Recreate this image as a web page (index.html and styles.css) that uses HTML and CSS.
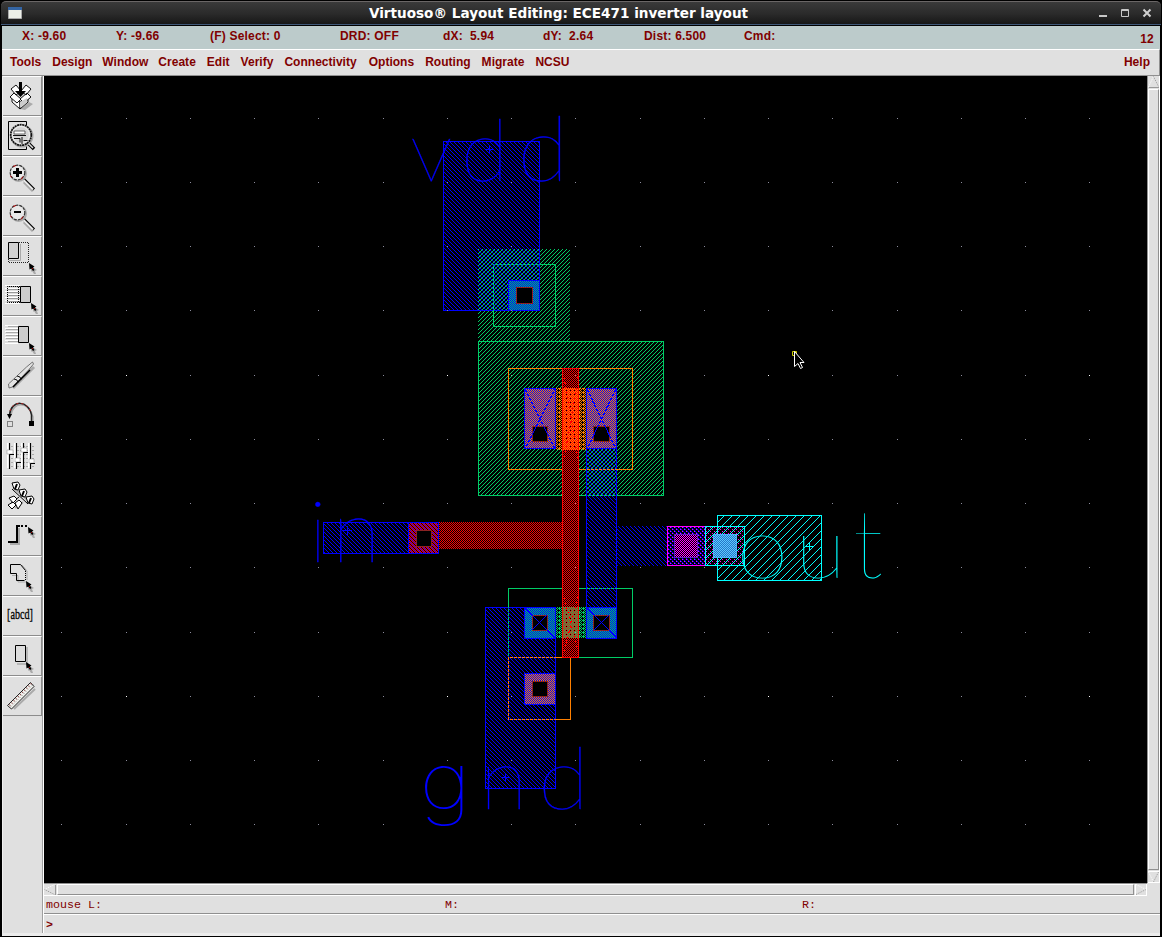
FILE: index.html
```html
<!DOCTYPE html>
<html lang="en">
<head>
<meta charset="utf-8">
<title>Virtuoso® Layout Editing: ECE471 inverter layout</title>
<link rel="stylesheet" href="styles.css">
</head>
<body>
<div class="window">
  <header class="titlebar">
    <svg class="winicon" width="14" height="12" viewBox="0 0 14 12"><path fill="#ecefe8" stroke="#aaa" d="M.5.5h13v11H.5z"/><path fill="#3465a4" d="M0 0h14v3H0z"/></svg>
    <h1>Virtuoso® Layout Editing: ECE471 inverter layout</h1>
    <svg class="controls" width="56" height="10" viewBox="0 0 56 10"><path fill="#c8c8c8" d="M0 7h8v2H0z"/><path fill="none" stroke="#c8c8c8" d="M22.500 1.500h7v7h-7zM22 2.500h8"/><path stroke="#d0d0d0" stroke-width="2" d="M44.500 1.500l7 7M51.500 1.500l-7 7"/></svg>
  </header>
  <div class="status">
    <span class="w-x">X: -9.60</span><span class="w-y">Y: -9.66</span><span class="w-sel">(F) Select: 0</span><span class="w-drd">DRD: OFF</span><span class="w-dx">dX:&nbsp; 5.94</span><span class="w-dy">dY:&nbsp; 2.64</span><span class="w-dist">Dist: 6.500</span><span>Cmd:</span><span class="count">12</span>
  </div>
  <nav class="menu">
    <span>Tools</span><span>Design</span><span class="win">Window</span><span>Create</span><span>Edit</span><span>Verify</span><span>Connectivity</span><span>Options</span><span>Routing</span><span>Migrate</span><span>NCSU</span><span class="help">Help</span>
  </nav>
  <div class="main">
    <aside class="tools">
      <svg class="defs" width="0" height="0"><defs>
        <g id="ptr"><path fill="#aaa" d="M2 3l6 4-2 1 1 3-2 0-2-3-1 1z"/><path d="M0 0l5.500 3.500-1.500 1 1.500 2.500-1.500 1-1.700-2.500L.5 6.500z"/><path fill="#a00" d="M3 5h1v1H3z"/></g>
        <g id="lens"><circle cx="18.500" cy="17.500" r="7.500" fill="none" stroke="#aaa" stroke-width="2"/><path stroke="#aaa" stroke-width="3" d="M24 26l9 9"/><path stroke="#000" stroke-width="3" d="M24 23.500l10 10"/><path stroke="#e8e8e8" stroke-width="2" d="M23.500 24l9.500 9.500"/><circle cx="17.500" cy="16.500" r="7.300" fill="#e8e8e8" stroke="#333" stroke-width="1.200" stroke-dasharray="3 1"/><path fill="none" stroke="#a00" d="M13 10.500l3-1M23 20.500l-2 3M10.500 19.500l1 2"/></g>
      </defs></svg>
      <div class="tool"><svg viewBox="3 1 38 38"><path fill="#aaa" d="M20 33l9-7 4 2-8 6z"/><g fill="#fff" stroke="#111"><path d="M12 21l8 5v7l-8-7zM28 21l-8 5v7l8-7z"/><path d="M11 13l5-4 5 6-5 4zM31 13l-5-4-5 6 5 4zM10 21l4-4 7 6-4 4zM31 21l-4-4-7 6 4 4z"/></g><path fill="#ccc" d="M20 26l7-4v4l-7 6z"/><path d="M19 6h3v9h4l-5.500 6L15 15h4z"/></svg></div>
      <div class="tool"><svg viewBox="3 1 38 38"><path fill="none" stroke="#000" d="M8.500 5.500h18v28h-18z"/><circle cx="22" cy="20" r="10.500" fill="none" stroke="#aaa" stroke-width="2"/><path stroke="#000" stroke-width="3.500" d="M29 28l5 5"/><path stroke="#ddd" stroke-width="1.500" d="M28 27l5 5"/><circle cx="21" cy="19" r="10.300" fill="#d5d5d5" stroke="#111" stroke-width="1.700" stroke-dasharray="2 .6"/><circle cx="21" cy="19" r="8.500" fill="none" stroke="#eee"/><path fill="#fff" stroke="#444" stroke-width=".8" d="M14 15h11v3H14z"/><path fill="none" stroke="#111" d="M13 19.500h13M14 22.500h6v4M22 21v7M23.500 24.500h4"/></svg></div>
      <div class="tool"><svg viewBox="3 1 38 38"><use href="#lens"/><path d="M16 12h3v3h3v3h-3v3h-3v-3h-3v-3h3z"/></svg></div>
      <div class="tool"><svg viewBox="3 1 38 38"><use href="#lens"/><path d="M14 15h7v2h-7z"/></svg></div>
      <div class="tool"><svg viewBox="3 1 38 38"><path fill="none" stroke="#222" stroke-dasharray="1 1" d="M19 6.500h9.500v20h-20v-4"/><path fill="none" stroke="#aaa" d="M9 24.500h11.500V8"/><path fill="#d0d0d0" stroke="#000" d="M8.500 6.500h10v16h-10z"/><use href="#ptr" x="29" y="27"/></svg></div>
      <div class="tool"><svg viewBox="3 1 38 38"><path fill="none" stroke="#999" d="M7 10.500h13M7 13.500h13M7 16.500h13M7 19.500h13M7 22.500h13M7 25.500h13"/><path fill="none" stroke="#fff" d="M5 9.500h15M5 12.500h15M5 15.500h15M5 18.500h15M5 21.500h15M5 24.500h15M5 27.500h15"/><path fill="none" stroke="#000" stroke-dasharray="1 1" d="M20 10.500H7.500v16H20M18.500 11v16"/><path fill="#ccc" stroke="#000" d="M20.500 10.500h10v16h-10z"/><use href="#ptr" x="31" y="27"/></svg></div>
      <div class="tool"><svg viewBox="3 1 38 38"><path fill="none" stroke="#aaa" d="M8 10.500h10M6 13.500h12M6 16.500h12M6 19.500h12M6 22.500h12M8 25.500h10"/><path fill="none" stroke="#fff" d="M5 9.500h13M5 12.500h13M5 15.500h13M5 18.500h13M5 21.500h13M5 24.500h13M5 27.500h13"/><path fill="#ccc" stroke="#000" d="M18.500 10.500h10v16h-10z"/><use href="#ptr" x="29" y="27"/></svg></div>
      <div class="tool"><svg viewBox="3 1 38 38"><path stroke="#aaa" stroke-width="3" d="M13 32L34 11"/><path fill="#e4e4e4" stroke="#555" stroke-width=".8" d="M8.500 28l18-17 6-5 1 2-5 6-16 17-3.500 1z"/><path stroke="#000" stroke-width="1.500" d="M13 31l17-17"/><path fill="none" stroke="#111" d="M14 23l3 1 1 3M17 20l3 1 1 3"/></svg></div>
      <div class="tool"><svg viewBox="3 1 38 38"><path fill="none" stroke="#aaa" stroke-width="1.500" d="M11 19C13 5 29 5 33 21v4"/><path fill="none" stroke="#222" stroke-width="1.500" d="M9.500 19C11 3 29 4 31.500 19v6"/><path fill="none" stroke="#b22" stroke-dasharray="2 3" d="M10 15C13 4 28 5 31 17"/><path d="M7 18h5l-2.500 5zM29 25h5v5h-5z"/><path fill="none" stroke="#222" stroke-dasharray="1 1" d="M7.500 25.500h5v5h-5z"/></svg></div>
      <div class="tool"><svg viewBox="3 1 38 38"><path stroke="#aaa" stroke-dasharray="2 1" d="M8 10.500h27M8 14.500h27M8 18.500h27M8 22.500h27M8 26.500h27M8 30.500h27"/><path stroke="#fff" stroke-width="2" d="M8 7v25M15 7v25M22 7v25M29 7v25"/><path stroke="#000" stroke-width="1.200" d="M9.500 7v26M16.500 7v26M23.500 7v26M30.500 7v26"/><path fill="#fff" stroke="#888" stroke-width=".5" d="M7 14h6v4H7zM15 22h5v4h-5zM21 12h6v4h-6zM29 23h5v4h-5z"/><path stroke="#000" d="M10 18.500h4M17 26.500h4M24 16.500h4M31 27.500h4"/></svg></div>
      <div class="tool"><svg viewBox="3 1 38 38"><path fill="none" stroke="#aaa" stroke-width="2" d="M15 13l16 14M15 32l8-6"/><path fill="none" stroke="#000" d="M12 13l16 15M10 28l9-7"/><g fill="#fff" stroke="#000"><path d="M12 7l6-1 2 3-2 5-4-1zM19 14l6-1 2 3-2 5-4-1zM26 21l6-1 2 3-2 5-4-1zM9 22l5-2 3 3-4 4zM8 29l5-3 3 3-4 4zM15 27l4-3 3 3-4 6z"/></g><path stroke="#000" stroke-width="2" d="M17 8l-2 5M24 15l-2 5M31 22l-2 5"/></svg></div>
      <div class="tool"><svg viewBox="3 1 38 38"><path fill="none" stroke="#aaa" stroke-width="2" d="M10 28h9V12"/><path fill="none" stroke="#000" stroke-width="2" d="M8 26h9V10h3"/><path stroke="#000" stroke-width="2" stroke-dasharray="2 2" d="M21 10h8"/><use href="#ptr" x="28" y="11"/></svg></div>
      <div class="tool"><svg viewBox="3 1 38 38"><path fill="none" stroke="#aaa" d="M12 19.500h6V26h8M22 9l5 6v9"/><path fill="none" stroke="#000" d="M25.500 14.500l-5-6h-10v9h6v7h8"/><path stroke="#000" stroke-dasharray="1 1" d="M25.500 15v10"/><use href="#ptr" x="26" y="25"/></svg></div>
      <div class="tool"><svg viewBox="3 1 38 38"><text class="abcd" x="7" y="23" textLength="26" lengthAdjust="spacingAndGlyphs">[abcd]</text></svg></div>
      <div class="tool"><svg viewBox="3 1 38 38"><path fill="none" stroke="#aaa" stroke-width="1.500" d="M17 28h10V11"/><path fill="#ddd" stroke="#000" d="M15.500 9.500h10v16h-10z"/><use href="#ptr" x="26" y="26"/></svg></div>
      <div class="tool"><svg viewBox="3 1 38 38"><path stroke="#aaa" stroke-width="2" d="M14 33l21-20"/><path fill="#f4f4f0" stroke="#222" d="M7.500 29.500l23-23 3.500 4-22.500 22.500z"/><path stroke="#844" stroke-width="1.500" stroke-dasharray="1 2" d="M9.500 29.500l22-22"/><path stroke="#777" stroke-width="1" stroke-dasharray="1 2" d="M11 30.500l22-22"/></svg></div>
    </aside>
    <section class="work">
      <div class="view">
        <svg class="canvas" width="1103" height="807" viewBox="44 76 1103 807">
          <defs>
            <pattern id="metal" width="4" height="4" patternUnits="userSpaceOnUse"><path fill="#00f" d="M0 0h1v1H0zM1 1h1v1H1zM2 2h1v1H2zM3 3h1v1H3z"/></pattern>
            <pattern id="well" width="4" height="4" patternUnits="userSpaceOnUse"><path fill="#00cc66" d="M3 0h1v1H3zM2 1h1v1H2zM1 2h1v1H1zM0 3h1v1H0z"/></pattern>
            <pattern id="poly" width="2" height="2" patternUnits="userSpaceOnUse"><path fill="#f00" d="M1 0h1v1H1zM0 1h1v1H0z"/></pattern>
            <pattern id="pact" width="2" height="2" patternUnits="userSpaceOnUse"><path fill="#ff8000" d="M1 0h1v1H1zM0 1h1v1H0z"/></pattern>
            <pattern id="nact" width="2" height="2" patternUnits="userSpaceOnUse"><path fill="#00cc66" d="M1 0h1v1H1zM0 1h1v1H0z"/></pattern>
            <pattern id="pchan" width="4" height="4" patternUnits="userSpaceOnUse"><path fill="#ff8000" d="M0 0h1v1H0zM2 0h1v1H2zM1 1h1v1H1zM3 1h1v1H3zM0 2h1v1H0zM1 3h1v1H1zM3 3h1v1H3zM3 0h1v1H3z"/></pattern>
            <pattern id="nchan" width="4" height="4" patternUnits="userSpaceOnUse"><path fill="#00cc66" d="M0 0h1v1H0zM2 0h1v1H2zM1 1h1v1H1zM3 1h1v1H3zM0 2h1v1H0zM1 3h1v1H1zM3 3h1v1H3zM3 0h1v1H3z"/></pattern>
            <pattern id="mix" width="2" height="2" patternUnits="userSpaceOnUse"><path fill="#00f" d="M0 0h1v1H0zM1 1h1v1H1z"/></pattern>
            <pattern id="m2" width="4" height="4" patternUnits="userSpaceOnUse"><path fill="#f0f" d="M0 1h1v1H0zM2 3h1v1H2z"/></pattern>
            <pattern id="via" width="2" height="2" patternUnits="userSpaceOnUse"><path fill="#f0f" d="M0 0h1v1H0zM1 1h1v1H1z"/></pattern>
            <pattern id="via2" width="2" height="2" patternUnits="userSpaceOnUse"><path fill="#2678c8" d="M0 0h2v2H0z"/><path fill="#5cc6ff" d="M0 0h1v1H0zM1 1h1v1H1z"/></pattern>
            <pattern id="m3" width="8" height="8" patternUnits="userSpaceOnUse"><path fill="#0ff" d="M7 0h1v1H7zM6 1h1v1H6zM5 2h1v1H5zM4 3h1v1H4zM3 4h1v1H3zM2 5h1v1H2zM1 6h1v1H1zM0 7h1v1H0z"/></pattern>
            <path id="dots" d="M61 0h1v1h-1zM126 0h1v1h-1zM190 0h1v1h-1zM254 0h1v1h-1zM318 0h1v1h-1zM383 0h1v1h-1zM447 0h1v1h-1zM511 0h1v1h-1zM575 0h1v1h-1zM640 0h1v1h-1zM704 0h1v1h-1zM768 0h1v1h-1zM832 0h1v1h-1zM897 0h1v1h-1zM961 0h1v1h-1zM1025 0h1v1h-1zM1089 0h1v1h-1z"/>
            <path id="majors" d="M126 0h1v1h-1zM447 0h1v1h-1zM768 0h1v1h-1zM1089 0h1v1h-1z"/>
          </defs>
          <g class="crisp">
            <!-- n-well -->
            <path fill="url(#well)" d="M478 249h92v92h-92z"/>
            <path fill="url(#well)" stroke="#00cc66" d="M478.500 341.500h185v154h-185z"/>
            <!-- metal 1 -->
            <g fill="url(#metal)" stroke="#00f">
              <path d="M443.500 141.500h96v169h-96z"/>
              <path d="M586.500 448.500h30v190h-30z"/>
              <path d="M485.500 607.500h70v181h-70z"/>
              <path d="M323.500 522.500h85v31h-85z"/>
            </g>
            <path fill="url(#metal)" d="M617 526h50v40h-50z"/>
            <!-- select layers -->
            <path fill="none" stroke="#00cc66" d="M493.500 264.500h62v62h-62zM508.500 588.500h124v69h-124z"/>
            <path fill="none" stroke="#ff8000" d="M508.500 368.500h124v101h-124zM508.500 657.500h62v62h-62z"/>
            <path fill="none" stroke="#00f" stroke-dasharray="1 3" d="M493.500 264.500h46M493.500 265v45M508.500 608v111M509 657.500h47M509 719.500h47M586 588.500h31M586 469.500h31"/>
            <!-- p-active and n-active -->
            <path fill="#000" d="M524 388h93v61h-93zM562 368h17v290h-17z"/>
            <path fill="url(#pact)" d="M524 388h32v61h-32zM586 388h31v61h-31zM524 673h31v31h-31z"/>
            <path fill="url(#nact)" d="M524 608h32v30h-32zM586 608h31v30h-31zM508 280h31v30h-31z"/>
            <path fill="url(#poly)" d="M409 522h153v27H409zM409 549h30v4h-30z"/>
            <!-- poly gate and channels -->
            <path fill="url(#pchan)" d="M556 388h30v62h-30z"/>
            <path fill="url(#nchan)" d="M556 607h30v31h-30z"/>
            <path fill="url(#poly)" d="M562 368h17v290h-17z"/>
            <path fill="none" stroke="#f00" d="M562.500 368v290M578.500 368v290M562 368.500h17M562 657.500h17"/>
            <path fill="none" stroke="#f00" stroke-dasharray="2 3" d="M564 377l14 83M578 377l-14 83M564 597l14 54M578 597l-14 54"/>
            <!-- contacts -->
            <path fill="url(#metal)" stroke="#00f" d="M408.500 522.500h30v31h-30z"/>
            <g fill="url(#mix)" stroke="#00f">
              <path d="M508.500 280.500h31v30h-31zM524.500 388.500h31v60h-31zM586.500 388.500h30v60h-30zM524.500 607.500h31v31h-31zM586.500 607.500h30v31h-30zM524.500 673.500h31v31h-31z"/>
            </g>
            <g fill="#000" stroke="#8b2323">
              <path d="M516.500 287.500h16v16h-16zM532.500 426.500h15v15h-15zM593.500 426.500h16v15h-16zM532.500 615.500h15v15h-15zM593.500 615.500h16v15h-16zM532.500 681.500h15v15h-15zM416.500 530.500h15v16h-15z"/>
            </g>
            <path fill="none" stroke="#00f" d="M525 389l30 60M555 389l-30 60M587 389l29 60M616 389l-29 60M525 608l30 30M547 615l-15 15M587 608l30 30M609 615l-15 15"/>
            <!-- via stack and output pad -->
            <path fill="url(#metal)" d="M667 526h38v39h-38z"/>
            <path fill="url(#m2)" stroke="#f0f" d="M667.500 526.500h38v39h-38z"/>
            <path fill="#000" d="M674 534h24v24h-24z"/>
            <path fill="url(#via)" stroke="#6020c0" d="M674.500 534.500h23v23h-23z"/>
            <path fill="url(#m3)" stroke="#0ff" d="M717.500 515.500h104v65h-104z"/>
            <path fill="url(#m2)" d="M705 526h40v40h-40z"/>
            <path fill="url(#m3)" stroke="#0ff" d="M705.500 526.500h39v39h-39z"/>
            <path fill="url(#via2)" stroke="#4cb4ff" d="M713.500 534.500h23v23h-23z"/>
            <!-- label origins -->
            <path stroke="#00f" d="M485 149.500h9M489.500 145v9M343 530.500h9M347.500 526v9M501 777.500h9M505.500 773v9"/>
            <path stroke="#0ff" d="M805 546.500h9M809.500 542v9"/>
            <!-- grid -->
            <g fill="#8c8c9c"><use href="#dots" y="118"/><use href="#dots" y="182"/><use href="#dots" y="246"/><use href="#dots" y="310"/><use href="#dots" y="375"/><use href="#dots" y="439"/><use href="#dots" y="503"/><use href="#dots" y="567"/><use href="#dots" y="632"/><use href="#dots" y="696"/><use href="#dots" y="760"/><use href="#dots" y="824"/></g>
            <g fill="#fff"><use href="#majors" y="375"/><use href="#majors" y="696"/></g>
          </g>
          <g class="pin">
            <text x="410 461" y="181">vd</text><text transform="translate(517.500 181) scale(1.080 1.030)">d</text>
            <text x="308.700 332" y="562">i<tspan class="wide">n</tspan></text>
            <text class="g" transform="translate(419.500 809) scale(1.120 1)">g</text><text x="480" y="809">n</text><text transform="translate(538 809) scale(1.080 1)">d</text>
            <text class="out" transform="translate(736.500 578) scale(1.080 1)">o</text><text class="out" transform="translate(795 578) scale(1.080 1)">u</text><text class="out" transform="translate(853 578) scale(1.050 1.110)">t</text>
          </g>
          <path fill="none" stroke="#cc0" d="M792.500 351.500h4v4h-4z"/>
          <path fill="#000" stroke="#fff" d="M794.500 351.500v15l3.500-3 2.500 5 2-1-2.500-5h4z"/>
        </svg>
        <div class="vscroll">
          <svg width="11" height="12" viewBox="0 0 11 12"><path stroke="#fff" stroke-dasharray="1 1" d="M.5 11L5.500.5"/><path stroke="#999" stroke-dasharray="1 1" d="M5.500.5l5 10"/><path stroke="#999" d="M1 11.500h10"/></svg>
          <div class="thumb"></div>
          <svg width="11" height="12" viewBox="0 0 11 12"><path stroke="#fff" stroke-dasharray="1 1" d="M.5 1l5 10"/><path stroke="#999" stroke-dasharray="1 1" d="M5.500 11l5-10"/><path stroke="#fff" d="M0 .5h11M0 11.500h11"/></svg>
        </div>
      </div>
      <div class="hscroll">
        <svg width="12" height="11" viewBox="0 0 12 11"><path stroke="#fff" stroke-dasharray="1 1" d="M.5 5.500l10-5"/><path stroke="#999" stroke-dasharray="1 1" d="M.5 5.500l10 5"/><path stroke="#999" d="M11.500 1v10"/></svg>
        <div class="thumb"></div>
        <svg width="12" height="11" viewBox="0 0 12 11"><path stroke="#fff" stroke-dasharray="1 1" d="M1 .5l10 5"/><path stroke="#999" stroke-dasharray="1 1" d="M1 10.500l10-5"/><path stroke="#fff" d="M.5 0v11M11.500 0v11"/></svg>
      </div>
      <div class="mouse"><span>mouse L:</span><span>M:</span><span>R:</span></div>
      <div class="prompt">&gt;</div>
    </section>
  </div>
</div>
</body>
</html>
```
FILE: styles.css
```css
* { box-sizing: border-box; }
body { margin: 0; background: #000; }
svg { display: block; }
.window {
  width: 1162px; height: 937px; padding: 1px 2px 1px 1px;
  display: flex; flex-direction: column; background: #000;
  font: bold 12px "Liberation Sans", sans-serif; color: #800000;
}
.titlebar {
  height: 24px; display: flex; align-items: center; padding: 0 6px 0 7px; margin: 0 -1px 0 0;
  border-top: 1px solid #6a6666; border-bottom: 1px solid #3f5878; border-radius: 5px 5px 0 0;
  background: linear-gradient(#3a3a3a, #2a2a2a 55%, #171717); color: #fff;
}
.titlebar h1 { flex: 1; margin: 0; text-align: center; font: bold 13.58px "DejaVu Sans", sans-serif; padding-right: 4px; white-space: nowrap; }
.status {
  height: 23px; margin: 1px 0 0 1px; padding-left: 20px; display: flex; background: #bccbcb;
  line-height: 20px; letter-spacing: .2px; white-space: nowrap;
}
.w-x { width: 94px; } .w-y { width: 94px; } .w-sel { width: 130px; } .w-drd { width: 103px; }
.w-dx { width: 100px; } .w-dy { width: 101px; } .w-dist { width: 100px; }
.count { margin-left: auto; padding-right: 6px; line-height: 27px; }
.menu {
  height: 27px; margin-left: 1px; padding-left: 8px; display: flex; gap: 11px; background: #e0e0e0;
  border-top: 1px solid #fff; border-bottom: 1px solid #909090; border-right: 1px solid #909090;
  line-height: 25px; letter-spacing: .02px;
}
.win { margin: 0 -1px; }
.menu span:nth-child(7) { margin-right: 1px; }
.help { margin-left: auto; padding-right: 9px; }
.main { flex: 1; display: flex; margin-left: 1px; background: #e0e0e0; min-height: 0; border-bottom: 3px solid #ececec; }
.tools { width: 42px; border-right: 1px solid #fff; border-left: 1px solid #f0f0f0; box-shadow: inset -1px 0 #a0a0a0; }
.defs { position: absolute; }
.tool { width: 39px; height: 40px; border-top: 1px solid #fff; border-bottom: 1px solid #8c8c8c; border-right: 1px solid #8c8c8c; background: #e0e0e0; }
.tool svg { width: 38px; height: 38px; overflow: visible; }
.abcd { font: 14px "Liberation Serif", serif; fill: #000; stroke: #000; stroke-width: .3; }
.work { flex: 1; display: flex; flex-direction: column; min-width: 0; }
.view { display: flex; height: 807px; background: #000; }
.canvas { flex: none; background: #000; }
.crisp { shape-rendering: crispEdges; }
.pin { font: 100 87px Lato, sans-serif; fill: #00f; stroke: #00f; stroke-width: .3; }
.pin .g { font-family: Inter, sans-serif; font-size: 79px; stroke: none; }
.wide { font-size: 89px; }
.pin .out { fill: #0ff; stroke: none; }
.vscroll { width: 13px; display: flex; flex-direction: column; gap: 1px; background: #e0e0e0; border-left: 1px solid #909090; border-right: 1px solid #fff; }
.thumb { flex: 1; border: 1px solid #fff; border-right-color: #909090; border-bottom-color: #909090; }
.hscroll { width: 1103px; height: 13px; display: flex; gap: 1px; border-top: 1px solid #909090; border-bottom: 1px solid #fff; background: #e0e0e0; }
.mouse, .prompt { font: 11.67px/18px "Liberation Mono", monospace; padding-left: 2px; }
.mouse { height: 18px; display: flex; border-bottom: 1px solid #909090; }
.mouse span { width: 399px; }
.mouse span + span { width: 357px; }
.prompt { flex: 1; border-top: 1px solid #fff; font-weight: bold; line-height: 20px; }
```
